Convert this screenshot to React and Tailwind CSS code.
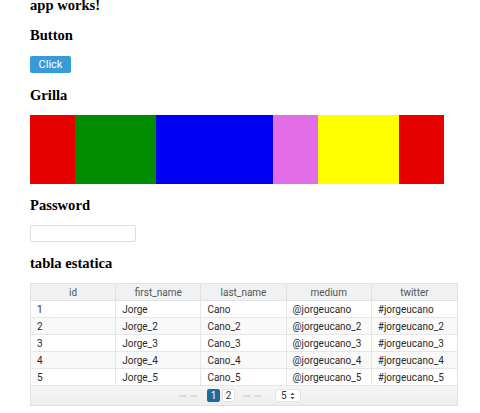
const rows = [
  ['1', 'Jorge', 'Cano', '@jorgeucano', '#jorgeucano'],
  ['2', 'Jorge_2', 'Cano_2', '@jorgeucano_2', '#jorgeucano_2'],
  ['3', 'Jorge_3', 'Cano_3', '@jorgeucano_3', '#jorgeucano_3'],
  ['4', 'Jorge_4', 'Cano_4', '@jorgeucano_4', '#jorgeucano_4'],
  ['5', 'Jorge_5', 'Cano_5', '@jorgeucano_5', '#jorgeucano_5'],
]

const cols = ['id', 'first_name', 'last_name', 'medium', 'twitter']

function Heading({ children, className = '' }) {
  return (
    <h3 className={`text-[14.6px] leading-[17px] font-bold text-black ${className}`}>
      {children}
    </h3>
  )
}

function Dashes() {
  return (
    <div className="flex items-center gap-[3px]">
      <span className="w-[8px] h-[2px] rounded-full bg-[#dcdcdc]" />
      <span className="w-[8px] h-[2px] rounded-full bg-[#dcdcdc]" />
    </div>
  )
}

export default function App() {
  return (
    <div className="w-[480px] h-[413px] overflow-hidden bg-white pl-[30px] font-['Liberation_Serif',serif]">
      <Heading className="-mt-[3px]">app works!</Heading>

      <Heading className="mt-[13px]">Button</Heading>
      <button
        type="button"
        className="mt-[12px] block w-[41px] h-[17px] rounded-[2px] bg-[#379bd9] text-white text-[11px] leading-[17px] font-['Roboto',sans-serif]"
      >
        Click
      </button>

      <Heading className="mt-[13.5px]">Grilla</Heading>
      <div className="mt-[11.5px] grid grid-cols-[45px_81px_117px_45px_81px_45px] h-[69px] w-[414px]">
        <div className="bg-[#e60000]" />
        <div className="bg-[#008c00]" />
        <div className="bg-[#0000f2]" />
        <div className="bg-[#e36de6]" />
        <div className="bg-[#ffff00]" />
        <div className="bg-[#e60000]" />
      </div>

      <Heading className="mt-[12.5px]">Password</Heading>
      <input
        type="password"
        className="mt-[11.5px] block w-[106px] h-[17px] rounded-[2px] border border-[#dedede] bg-white outline-none"
      />

      <Heading className="mt-[13px]">tabla estatica</Heading>
      <div className="mt-[11px] w-[428px] border border-[#e0e1e3] font-['Roboto',sans-serif] text-[10px]">
        <div className="grid grid-cols-5 h-[17px] bg-[#f0f1f3] border-b border-[#e0e1e3] text-[#555]">
          {cols.map((c, i) => (
            <div
              key={c}
              className={`flex items-center justify-center ${i < 4 ? 'border-r border-[#e0e1e3]' : ''}`}
            >
              {c}
            </div>
          ))}
        </div>
        {rows.map((r, ri) => (
          <div
            key={ri}
            className={`grid grid-cols-5 h-[17px] border-b border-[#e6e6e8] text-[#2a2a2a] ${ri % 2 === 1 ? 'bg-[#f9f9fa]' : 'bg-white'}`}
          >
            {r.map((cell, i) => (
              <div
                key={i}
                className={`flex items-center px-[6px] ${i < 4 ? 'border-r border-[#e6e6e8]' : ''}`}
              >
                {cell}
              </div>
            ))}
          </div>
        ))}
        <div className="h-[19px] bg-gradient-to-b from-[#f5f5f6] to-[#eeeef0] flex items-center pl-[148px] text-[10px]">
          <Dashes />
          <div className="ml-[9px] flex items-center gap-[2px]">
            <span className="w-[13px] h-[13px] rounded-[2px] bg-[#1d6b9e] text-white flex items-center justify-center">
              1
            </span>
            <span className="w-[13px] h-[13px] rounded-[2px] bg-white border border-[#e2e2e2] text-[#333] flex items-center justify-center">
              2
            </span>
          </div>
          <div className="ml-[8px]">
            <Dashes />
          </div>
          <div className="ml-[13px] w-[26px] h-[13px] rounded-[3px] bg-white border border-[#e4e4e4] flex items-center justify-between px-[5px] text-[#333]">
            <span>5</span>
            <svg width="5" height="8" viewBox="0 0 5 8">
              <path d="M0.5 3 L2.5 0.8 L4.5 3 Z" fill="#444" />
              <path d="M0.5 5 L2.5 7.2 L4.5 5 Z" fill="#444" />
            </svg>
          </div>
        </div>
      </div>
    </div>
  )
}
